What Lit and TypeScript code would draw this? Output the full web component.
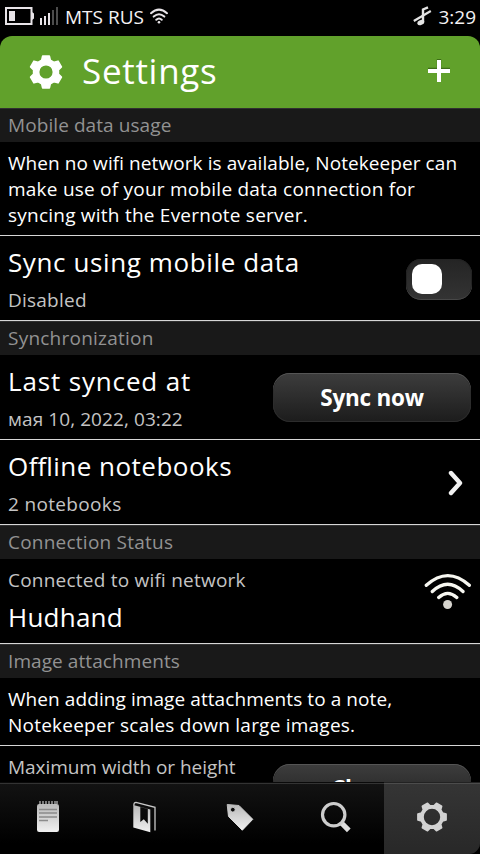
import { LitElement, html, css, svg } from "lit";
import { customElement } from "lit/decorators.js";

// Six-toothed cog centred in a 36 by 36 box.
const gear = (fill: string, hole: number, outer: number, root: number, turn: number) => {
  const pts: string[] = [];
  for (let i = 0; i < 6; i++) {
    for (const [da, r] of [[-20, root], [-12, outer], [12, outer], [20, root]]) {
      const a = ((i * 60 + da + turn) * Math.PI) / 180;
      pts.push(`${(18 + r * Math.sin(a)).toFixed(2)},${(18 - r * Math.cos(a)).toFixed(2)}`);
    }
  }
  return svg`<path fill=${fill} stroke=${fill} stroke-width="1.6" stroke-linejoin="round" fill-rule="evenodd"
    d="M${pts.join("L")}Z M${18 - hole},18a${hole},${hole} 0 1 0 ${hole * 2},0a${hole},${hole} 0 1 0 ${-hole * 2},0Z"/>`;
};

const metal = (id: string) => svg`<defs><linearGradient id=${id} x2="0" y2="1"><stop stop-color="#b9b9b9"/><stop offset="1" stop-color="#f0f0f0"/></linearGradient></defs>`;

const icons = {
  battery: html`<svg width="30" height="18" viewBox="0 0 30 18"><path d="M1 1h25.500v16H1z" fill="none" stroke="#e8e4e8" stroke-width="2"/><path d="M4 4h6v10H4zM27 5l2 1.500v5L27 13z" fill="#e8e4e8"/></svg>`,
  signal: html`<svg class="signal" width="18" height="18" viewBox="0 0 18 18"><path d="M0 11h2v7H0zM4 9h2v9H4zM8 6h2v12H8z" fill="#e8e4e8"/><path d="M12 3h2v15h-2zM16 0h2v18h-2z" fill="#4c4c4c"/></svg>`,
  wifiSmall: html`<svg class="wifi-small" width="18" height="16" viewBox="0 0 18 16"><g fill="none" stroke="#e8e4e8" stroke-width="2" stroke-linecap="round"><path d="M1 5.200Q9-2 17 5.200M3.700 8.600Q9 3.800 14.300 8.600M6.300 11.700Q9 9.200 11.700 11.700"/></g><circle cx="9" cy="14.300" r="1.300" fill="#e8e4e8"/></svg>`,
  silent: html`<svg width="20" height="20" viewBox="0 0 20 20"><path d="M.8 15 17.800 5" stroke="#e4e4e4" stroke-width="2.200"/><path d="M10 16V3.500L15 1.300" fill="none" stroke="#e4e4e4" stroke-width="2.400"/><ellipse cx="7.800" cy="16.600" rx="3.600" ry="2.400" transform="rotate(-22 7.800 16.600)" fill="#e4e4e4"/></svg>`,
  plus: html`<svg class="plus" width="26" height="26" viewBox="0 0 26 26"><path d="M2 12h22M13 1v12" stroke="#3d6d17" stroke-width="4.400"/><path d="M2 13h22M13 2v22" stroke="#fff" stroke-width="4"/></svg>`,
  chevron: html`<svg class="chevron" width="18" height="26" viewBox="0 0 18 26"><path d="M4 3 13 13 4 23" fill="none" stroke="#f2f2f2" stroke-width="4.400" stroke-linecap="round" stroke-linejoin="round"/></svg>`,
  wifi: html`<svg class="wifi" width="48" height="40" viewBox="0 0 48 40"><g fill="none" stroke="#f6f6f0" stroke-width="3.300" stroke-linecap="round"><path d="M2.300 13.300Q23.800-6 45.300 13.300M8.300 19.500Q23.700 5 39 19.500M14.700 25.500Q23.700 17.300 32.800 25.500"/></g><circle cx="23.600" cy="32.500" r="4.500" fill="#d6d4ce"/></svg>`,
  notes: html`<svg width="26" height="34" viewBox="0 0 26 34">${metal("notes")}<rect x="2" y="3" width="22" height="28" rx="2.200" fill="url(#notes)"/><path d="M5 0v4M8 0v4M11 0v4M14 0v4M17 0v4M20 0v4M22 0v3" stroke="#c4c4c4" stroke-width="1.200"/><path d="M4 8.500h18M4 12h18M4 16h18M4 19.500h9" stroke="#8b8b8b" stroke-width="1.400"/></svg>`,
  book: html`<svg width="26" height="34" viewBox="0 0 26 34">${metal("book")}<path fill-rule="evenodd" fill="url(#book)" d="M2.300 4 19.300 8.500v22.800L2.300 26.500ZM9.300 6v15l3.500-2.700 4 4.500V8Z"/><path d="M2.900 4.500Q2.700 1.300 5 1.300L24 6.300V29.500" fill="none" stroke="#c8c8c8" stroke-width="1.300"/></svg>`,
  tag: html`<svg width="30" height="30" viewBox="0 0 30 30">${metal("tag")}<path fill="url(#tag)" stroke="url(#tag)" stroke-linejoin="round" fill-rule="evenodd" d="M2.200 1.500 14 2.500 27.800 16.300 17.300 27.200 3.500 13.500ZM5.400 6.700a2.400 2.400 0 1 0 4.800 0a2.400 2.400 0 1 0-4.800 0Z"/></svg>`,
  search: html`<svg width="36" height="36" viewBox="0 0 36 36"><path d="M23.500 23 30.800 30.300" stroke="#dedede" stroke-width="5.200"/><circle cx="15.700" cy="14.700" r="11.200" fill="none" stroke="#cdcdcd" stroke-width="3.200"/></svg>`,
};

@customElement("app-root")
export class AppRoot extends LitElement {
  static styles = css`
    :host { display: flex; flex-direction: column; width: 480px; height: 854px; overflow: hidden;
      background: #000; color: #fff; font-family: "Open Sans", "Noto Sans", sans-serif;
      font-feature-settings: "liga" 1; }
    * { box-sizing: border-box; }
    svg { display: block; flex: none; }
    .status { height: 36px; flex: none; display: flex; align-items: center; font-size: 19px; line-height: 34px;
      padding: 0 4px 4px 5px; color: #f4f2f4; white-space: nowrap; }
    .status svg { margin-top: -1px; }
    .status .signal { margin-left: 5px; }
    .carrier { margin-left: 7px; width: 80px; padding-top: 2px; }
    .wifi-small { margin-left: 5px; }
    .clock { margin-left: 5px; width: 38px; padding-top: 2px; text-align: right; }
    .spacer { flex: 1; }
    .header { height: 72px; flex: none; display: flex; align-items: center; padding: 0 28px;
      background: #61a12b; border-radius: 12px 12px 0 0; }
    h1 { margin: 0 auto 0 18px; font-size: 35px; font-weight: 400; line-height: 70px; height: 72px; letter-spacing: .7px; }
    .plus { margin-bottom: 2px; }
    .content { flex: 1; min-height: 0; overflow: hidden; }
    .section { height: 34px; padding: 0 8px; font-size: 19px; line-height: 34px; color: #929292;
      background: #191919; box-shadow: inset 0 1px #303030; white-space: nowrap; }
    .para { padding: 8px 8px 7px; font-size: 19px; line-height: 26px; border-bottom: 1px solid #d6d6d6; white-space: nowrap; }
    .row { height: 85px; display: flex; justify-content: space-between; padding: 9px 8px 0; border-bottom: 1px solid #d6d6d6; white-space: nowrap; }
    .row.sub-first { padding-top: 8px; }
    .text { display: flex; flex-direction: column; gap: 8px; }
    .sub-first .text { gap: 7px; }
    .title { font-size: 26px; line-height: 34px; }
    .sub { font-size: 19px; line-height: 26px; color: #c4c4c4; }
    .t0 { letter-spacing: -.05px; }
    .t1 { letter-spacing: .08px; }
    .t2 { letter-spacing: .23px; }
    .t3 { letter-spacing: .34px; }
    .t4 { letter-spacing: .48px; }
    .t6 { letter-spacing: .61px; }
    .t8 { letter-spacing: .85px; }
    .switch { width: 66px; height: 41px; margin-top: 14px; border-radius: 15px; padding: 5px 6px;
      background: linear-gradient(#242424, #343434); box-shadow: inset 0 -1px #484848, inset 0 0 0 1px #222; }
    .thumb { width: 30px; height: 30px; border-radius: 10px; background: #fff; }
    .button { width: 198px; height: 49px; margin: 9px 1px 0 0; border-radius: 17px; text-align: center;
      font-size: 22.5px; line-height: 49px; font-weight: 700; letter-spacing: -.25px;
      background: linear-gradient(#3d3d3d, #1c1c1c); box-shadow: inset 0 1px #555, inset 0 0 0 1px #2c2c2c; }
    .sub-first .button { margin-top: 10px; }
    .chevron { margin-top: 21px; margin-right: 7px; }
    .wifi { margin-top: 5px; }
    .toolbar { height: 72px; flex: none; display: grid; grid-template-columns: repeat(5, 96px);
      background: linear-gradient(#131313, #000 85%); box-shadow: inset 0 1px #0a0a0a, inset 0 2px #333; }
    .tab { display: flex; align-items: center; justify-content: center; }
    .active { background: linear-gradient(#353535, #282828); box-shadow: inset 0 1px #222, inset 0 2px #4c4c4c;
      border-bottom-right-radius: 11px; padding-bottom: 2px; }
  `;

  private section(label: string, track: string) {
    return html`<div class="section"><span class=${track}>${label}</span></div>`;
  }

  private row(title: string, titleTrack: string, sub: string, subTrack: string, extra: unknown, subFirst = false) {
    const a = title ? html`<span class="title ${titleTrack}">${title}</span>` : "";
    const b = html`<span class="sub ${subTrack}">${sub}</span>`;
    return html`<div class="row ${subFirst ? "sub-first" : ""}">
      <div class="text">${subFirst ? [b, a] : [a, b]}</div>${extra}</div>`;
  }

  render() {
    return html`
      <div class="status">
        ${icons.battery}${icons.signal}
        <span class="carrier">MTS RUS</span>
        ${icons.wifiSmall}
        <span class="spacer"></span>
        ${icons.silent}
        <span class="clock">3:29</span>
      </div>
      <div class="header">
        <svg width="36" height="36" viewBox="0 0 36 36">${gear("#fff", 7.4, 16.2, 12.6, 0)}</svg>
        <h1>Settings</h1>
        ${icons.plus}
      </div>
      <div class="content">
        ${this.section("Mobile data usage", "t1")}
        <div class="para"><span class="t1">When no wifi network is available, Notekeeper can</span><br><span class="t2">make use of your mobile data connection for</span><br><span class="t2">syncing with the Evernote server.</span></div>
        ${this.row("Sync using mobile data", "t6", "Disabled", "t2", html`<div class="switch"><div class="thumb"></div></div>`)}
        ${this.section("Synchronization", "t2")}
        ${this.row("Last synced at", "t8", "мая 10, 2022, 03:22", "t1", html`<div class="button">Sync now</div>`)}
        ${this.row("Offline notebooks", "t4", "2 notebooks", "t3", icons.chevron)}
        ${this.section("Connection Status", "t2")}
        ${this.row("Hudhand", "t2", "Connected to wifi network", "t2", icons.wifi, true)}
        ${this.section("Image attachments", "t1")}
        <div class="para"><span class="t1">When adding image attachments to a note,</span><br><span class="t2">Notekeeper scales down large images.</span></div>
        ${this.row("", "", "Maximum width or height", "t0", html`<div class="button">Change</div>`, true)}
      </div>
      <div class="toolbar">
        <div class="tab">${icons.notes}</div>
        <div class="tab">${icons.book}</div>
        <div class="tab">${icons.tag}</div>
        <div class="tab">${icons.search}</div>
        <div class="tab active"><svg width="36" height="36" viewBox="0 0 36 36">${gear("#d2d2d2", 9, 14.4, 11.3, 30)}</svg></div>
      </div>`;
  }
}
